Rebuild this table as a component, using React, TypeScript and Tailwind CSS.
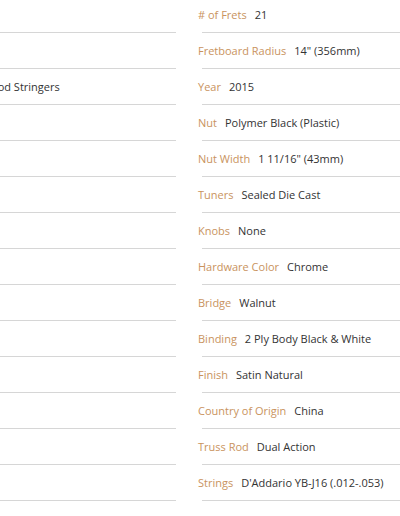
const leftSpecs: [string, string][] = [
  ["", ""],
  ["", ""],
  ["Neck", "Mahogany w/ Walnut & Rosewood Stringers"],
  ["", ""],
  ["", ""],
  ["", ""],
  ["", ""],
  ["", ""],
  ["", ""],
  ["", ""],
  ["", ""],
  ["", ""],
  ["", ""],
  ["", ""],
]

const rightSpecs: [string, string][] = [
  ["# of Frets", "21"],
  ["Fretboard Radius", "14\" (356mm)"],
  ["Year", "2015"],
  ["Nut", "Polymer Black (Plastic)"],
  ["Nut Width", "1 11/16\" (43mm)"],
  ["Tuners", "Sealed Die Cast"],
  ["Knobs", "None"],
  ["Hardware Color", "Chrome"],
  ["Bridge", "Walnut"],
  ["Binding", "2 Ply Body Black & White"],
  ["Finish", "Satin Natural"],
  ["Country of Origin", "China"],
  ["Truss Rod", "Dual Action"],
  ["Strings", "D'Addario YB-J16 (.012-.053)"],
]

function SpecRow({ label, value }: { label: string; value: string }) {
  return (
    <li className="h-[36px] flex flex-col">
      <div className="flex items-center gap-2 h-[18px] mt-[7px] whitespace-nowrap leading-[18px]">
        {label && <span className="text-[#c9935e]">{label}</span>}
        {value && <span className="text-[#333333]">{value}</span>}
      </div>
      <div className="mt-auto mb-[2px] mx-1 border-b border-[#d6d6d6]" />
    </li>
  )
}

export default function App() {
  return (
    <div className="w-[400px] h-[516px] overflow-hidden bg-white font-['Open_Sans',sans-serif] text-[11px]">
      <div className="flex gap-[18px] ml-[-198px] mt-[-1px]">
        <ul className="w-[378px] shrink-0">
          {leftSpecs.map(([l, v], i) => (
            <SpecRow key={i} label={l} value={v} />
          ))}
        </ul>
        <ul className="w-[378px] shrink-0">
          {rightSpecs.map(([l, v], i) => (
            <SpecRow key={i} label={l} value={v} />
          ))}
        </ul>
      </div>
    </div>
  )
}
